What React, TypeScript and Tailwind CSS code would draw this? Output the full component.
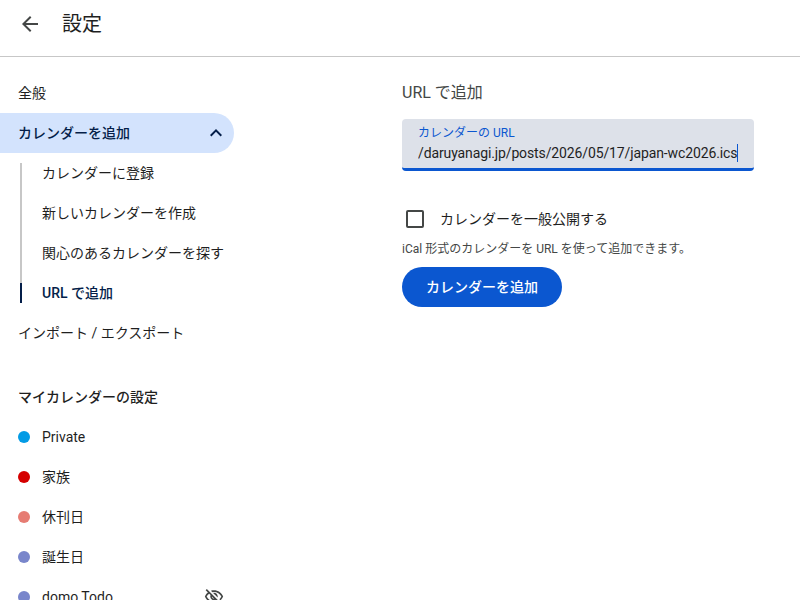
const font = { fontFamily: '"Roboto", "Noto Sans CJK JP", sans-serif' };

const subItems = ["カレンダーに登録", "新しいカレンダーを作成", "関心のあるカレンダーを探す"];

const calendars = [
  { name: "Private", color: "bg-[#039be5]" },
  { name: "家族", color: "bg-[#d50000]" },
  { name: "休刊日", color: "bg-[#e67c73]" },
  { name: "誕生日", color: "bg-[#7986cb]" },
  { name: "domo Todo", color: "bg-[#7986cb]", hidden: true },
];

function Icon({ d, className }: { d: string; className: string }) {
  return (
    <svg viewBox="0 0 24 24" fill="currentColor" className={className}>
      <path d={d} />
    </svg>
  );
}

const arrowBack = "M20 11H7.83l5.59-5.59L12 4l-8 8 8 8 1.41-1.41L7.83 13H20v-2z";
const expandLess = "M12 8l-6 6 1.41 1.41L12 10.83l4.59 4.58L18 14z";
const visibilityOff =
  "M12 6c3.79 0 7.17 2.13 8.82 5.5-.59 1.22-1.42 2.27-2.41 3.12l1.41 1.41c1.39-1.23 2.49-2.77 3.18-4.53C21.27 7.11 17 4 12 4c-1.27 0-2.49.2-3.64.57l1.65 1.65C10.66 6.09 11.32 6 12 6zm-1.07 1.14L13 9.21c.57.25 1.03.71 1.28 1.28l2.07 2.07c.08-.34.14-.7.14-1.07C16.5 9.01 14.48 7 12 7c-.37 0-.72.05-1.07.14zM2.01 3.87l2.68 2.68C3.06 7.83 1.77 9.53 1 11.5 2.73 15.89 7 19 12 19c1.52 0 2.98-.29 4.32-.82l3.42 3.42 1.41-1.41L3.42 2.45 2.01 3.87zm7.5 7.5l2.61 2.61c-.04.01-.08.02-.12.02-1.38 0-2.5-1.12-2.5-2.5 0-.05.01-.08.01-.13zm-3.4-3.4l1.75 1.75c-.23.55-.36 1.15-.36 1.78 0 2.48 2.02 4.5 4.5 4.5.63 0 1.23-.13 1.77-.36l.98.98c-.88.24-1.8.38-2.75.38-3.79 0-7.17-2.13-8.82-5.5.7-1.43 1.72-2.61 2.93-3.53z";

export default function App() {
  return (
    <div style={font} className="flex h-[600px] flex-col overflow-hidden bg-white text-[#1f1f1f]">
      <header className="flex h-[57px] shrink-0 items-center border-b border-[#c7c7c7] pb-2 pl-[18px]">
        <Icon d={arrowBack} className="h-6 w-6 text-[#444746]" />
        <h1 className="ml-5 text-[20px] leading-6">設定</h1>
      </header>

      <div className="flex min-h-0 flex-1">
        <nav className="w-[234px] shrink-0 pt-4 text-sm">
          <div className="flex h-10 items-center pl-[18px]">全般</div>
          <div className="flex h-10 items-center justify-between rounded-r-full bg-[#d3e3fd] pr-[6px] pl-[18px] font-medium text-[#041e49]">
            カレンダーを追加
            <Icon d={expandLess} className="h-6 w-6" />
          </div>
          <div className="flex">
            <div className="ml-5 flex w-0.5 flex-col pt-[10px] pb-[10px]">
              <div className="flex-1 bg-[#c7c7c7]" />
              <div className="h-5 bg-[#041e49]" />
            </div>
            <ul className="ml-5">
              {subItems.map((item) => (
                <li key={item} className="flex h-10 items-center">
                  {item}
                </li>
              ))}
              <li className="flex h-10 items-center font-medium text-[#041e49]">URL で追加</li>
            </ul>
          </div>
          <div className="flex h-10 items-center pl-[18px]">インポート / エクスポート</div>

          <h2 className="mt-[24px] flex h-10 items-center pl-[18px] font-medium">マイカレンダーの設定</h2>
          <ul>
            {calendars.map((cal) => (
              <li key={cal.name} className="flex h-10 items-center pl-[18px]">
                <span className={`h-3 w-3 rounded-full ${cal.color}`} />
                <span className="ml-3 flex-1">{cal.name}</span>
                {cal.hidden && <Icon d={visibilityOff} className="mr-[10px] h-5 w-5 text-[#444746]" />}
              </li>
            ))}
          </ul>
        </nav>

        <main className="ml-[168px] w-[352px] pt-[26px]">
          <h2 className="text-base leading-[20px] text-[#444746]">URL で追加</h2>
          <div className="mt-4 h-[52px] rounded border-b-[3px] border-[#0b57d0] bg-[#dde1e9] pt-[6px] pr-3 pl-4">
            <div className="text-xs leading-4 text-[#0b57d0]">カレンダーの URL</div>
            <div className="mt-[2px] flex items-center overflow-hidden text-[14px] leading-5 tracking-[-0.12px] whitespace-nowrap">
              <span>/daruyanagi.jp/posts/2026/05/17/japan-wc2026.ics</span>
              <span className="h-[18px] w-px shrink-0 bg-[#0b57d0]" />
            </div>
          </div>
          <label className="mt-[38px] flex items-center pl-1">
            <span className="h-[18px] w-[18px] rounded-[2px] border-2 border-[#444746]" />
            <span className="ml-4 text-sm leading-5">カレンダーを一般公開する</span>
          </label>
          <p className="mt-3 text-xs leading-4 text-[#444746]">iCal 形式のカレンダーを URL を使って追加できます。</p>
          <button className="mt-[10px] flex h-10 w-40 items-center justify-center rounded-full bg-[#0b57d0] text-sm font-medium text-white">
            カレンダーを追加
          </button>
        </main>
      </div>
    </div>
  );
}
